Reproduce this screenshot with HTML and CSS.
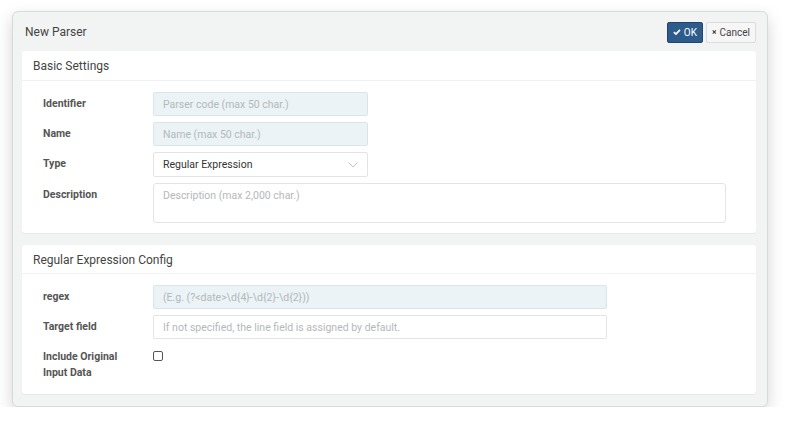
FILE: index.html
```html
<!DOCTYPE html>
<html>
	<head>
		<title>New Parser</title>
		<link rel="stylesheet" href="styles.css">
	</head>
	<body>
		<div class="panel">
			<div class="panel-head">
				<span class="panel-title">New Parser</span>
				<div class="actions">
					<button class="btn ok" type="button">
						<svg width="9" height="8" viewBox="0 0 9 8"><path d="M1 4.2 L3.4 6.5 L8 1.5" fill="none" stroke="#fff" stroke-width="1.9"/></svg>OK
					</button>
					<button class="btn cancel" type="button">
						<svg width="8" height="8" viewBox="0 0 8 8"><path d="M1.2 1.2 L6.8 6.8 M6.8 1.2 L1.2 6.8" stroke="#444" stroke-width="2.1"/></svg>Cancel
					</button>
				</div>
			</div>

			<div class="card">
				<div class="card-head first">Basic Settings</div>
				<div class="card-body">
					<div class="row">
						<label class="lbl">Identifier</label>
						<input class="field locked" type="text" placeholder="Parser code (max 50 char.)" />
					</div>
					<div class="row">
						<label class="lbl">Name</label>
						<input class="field locked" type="text" placeholder="Name (max 50 char.)" />
					</div>
					<div class="row">
						<label class="lbl">Type</label>
						<div class="field select">
							<span>Regular Expression</span>
							<svg width="10" height="6" viewBox="0 0 10 6"><path d="M0.5 0.5 L5 5 L9.5 0.5" fill="none" stroke="#bbb" stroke-width="0.9"/></svg>
						</div>
					</div>
					<div class="row">
						<label class="lbl">Description</label>
						<textarea class="field area" placeholder="Description (max 2,000 char.)"></textarea>
					</div>
				</div>
			</div>

			<div class="card">
				<div class="card-head">Regular Expression Config</div>
				<div class="card-body">
					<div class="row">
						<label class="lbl">regex</label>
						<input class="field wide locked" type="text" placeholder="(E.g. (?&lt;date&gt;\d{4}-\d{2}-\d{2}))" />
					</div>
					<div class="row">
						<label class="lbl">Target field</label>
						<input class="field wide" type="text" placeholder="If not specified, the line field is assigned by default." />
					</div>
					<div class="row last">
						<label class="lbl two">Include Original<br />Input Data</label>
						<input class="check" type="checkbox" />
					</div>
				</div>
			</div>
		</div>
	</body>
</html>
```

FILE: styles.css
```css
body {
	margin: 0;
	background-color: #ffffff;
	font-family: Roboto, "Liberation Sans", sans-serif;
	color: #333333;
}

.panel {
	margin-left: 12px;
	margin-top: 11px;
	width: 756px;
	height: 396px;
	box-sizing: border-box;
	background-color: #f2f4f4;
	border: 1px solid #d6dada;
	border-radius: 6px;
	box-shadow: 0 6px 16px rgba(0, 0, 0, 0.17);
	padding: 0 11px 0 9px;
}

.panel-head {
	height: 39px;
	display: flex;
	align-items: center;
	justify-content: space-between;
}

.panel-title {
	font-size: 12px;
	color: #444444;
	padding-left: 3px;
}

.actions {
	display: flex;
	gap: 3px;
	margin-top: 1px;
}

.btn {
	height: 21px;
	padding: 0 5px;
	font-family: Roboto, "Liberation Sans", sans-serif;
	font-size: 10px;
	display: flex;
	align-items: center;
	gap: 3px;
	border-radius: 2px;
	outline: none;
}

.ok {
	background-color: #2d5b8c;
	border: 1px solid #1f4570;
	color: #ffffff;
	width: 36px;
	justify-content: center;
}

.cancel {
	background-color: #f6f6f6;
	border: 1px solid #dcdcdc;
	color: #444444;
	width: 50px;
	justify-content: center;
}

.card {
	background-color: #ffffff;
	border-radius: 3px;
	box-shadow: 0 1px 1px rgba(0, 0, 0, 0.05);
	margin-bottom: 12px;
}

.card-head {
	height: 28px;
	line-height: 30px;
	padding-left: 11px;
	font-size: 12px;
	color: #444444;
	border-bottom: 1px solid #eff1f1;
}

.card-head.first {
	height: 29px;
}

.card-body {
	padding: 11px 30px 10px 21px;
	display: flex;
	flex-direction: column;
	gap: 6px;
}

.row {
	display: flex;
	align-items: flex-start;
}

.row.last {
	margin-bottom: 3px;
}

.lbl {
	width: 110px;
	flex-shrink: 0;
	font-size: 10.5px;
	font-weight: bold;
	color: #555555;
	line-height: 24px;
}

.lbl.two {
	line-height: 16px;
	padding-top: 4px;
}

.field {
	box-sizing: border-box;
	width: 215px;
	height: 24px;
	border: 1px solid #e3e5e5;
	border-radius: 2px;
	padding: 0 9px;
	font-family: Roboto, "Liberation Sans", sans-serif;
	font-size: 10.5px;
	color: #333333;
	background-color: #ffffff;
	outline: none;
}

.field::placeholder {
	color: #b4b8ba;
}

.locked {
	background-color: #ebf3f6;
	border-color: #dde4e7;
}

.wide {
	width: 454px;
}

.select {
	display: flex;
	align-items: center;
	justify-content: space-between;
	height: 25px;
}

.area {
	width: 573px;
	height: 40px;
	padding-top: 5px;
	resize: none;
	border-radius: 3px;
}

.check {
	appearance: none;
	width: 10px;
	height: 10px;
	margin: 6px 0 0 0;
	border: 1px solid #555555;
	border-radius: 2px;
	background-color: #ffffff;
}
```
